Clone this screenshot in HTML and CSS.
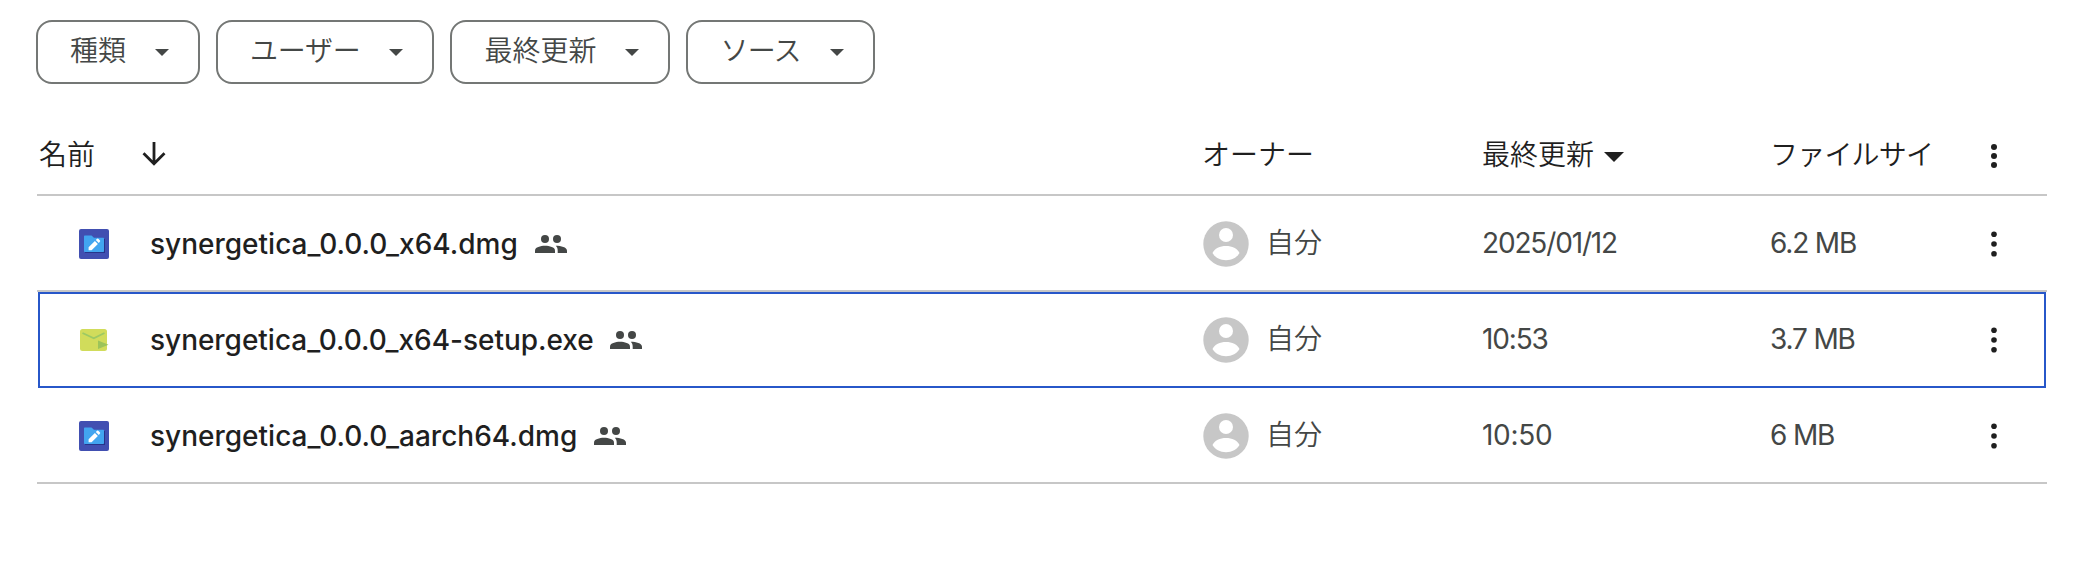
FILE: index.html
```html
<!DOCTYPE html>
<html lang="ja">
<head>
<meta charset="utf-8">
<title>ファイル一覧</title>
<link rel="stylesheet" href="styles.css">
</head>
<body>
<svg class="defs" width="0" height="0" aria-hidden="true">
  <defs>
    <symbol id="caret" viewBox="0 0 20 10"><path d="M0 0h20L10 10z"/></symbol>
    <symbol id="people" viewBox="0 0 32 18">
      <circle cx="10" cy="4" r="4"/>
      <circle cx="22" cy="4" r="4"/>
      <path d="M0 18v-2.600C0 12.200 5.500 10.700 10 10.700s10 1.500 10 4.700V18z"/>
      <path d="M20.800 10.800C26 10.800 32 12.300 32 15.700V18h-9.300v-2.600c0-2-.7-3.500-1.900-4.600z"/>
    </symbol>
    <symbol id="avatar" viewBox="0 0 46 46">
      <circle cx="23" cy="23" r="22.700" fill="#c7c7c7"/>
      <circle cx="23" cy="14" r="7" fill="#fff"/>
      <path d="M9.500 32C11.500 27.500 17 25 23 25s11.500 2.500 13.500 7C34 36.500 29 39.200 23 39.200S12 36.500 9.500 32z" fill="#fff"/>
    </symbol>
    <symbol id="dots" viewBox="0 0 8 28">
      <circle cx="4" cy="4.200" r="2.800"/><circle cx="4" cy="14" r="2.800"/><circle cx="4" cy="23.800" r="2.800"/>
    </symbol>
    <symbol id="disk" viewBox="0 0 30 30">
      <rect width="30" height="30" rx="2" fill="#414fb1"/>
      <path d="M6 8.500h8l2.500 1.500h9.500v14H6z" fill="#27358b"/>
      <path d="M5 7.200Q5 6.500 5.700 6.500h6.800l2.500 2.300h9.300q.7 0 .7.700v12.700q0 .8-.8.800H5.800q-.8 0-.8-.8z" fill="#42a5f0"/>
      <path d="M9.600 21.200v-3l6.300-6.300 3 3-6.300 6.300zM16.800 11l1.300-1.300q.6-.5 1.200 0l1.700 1.700q.5.600 0 1.200L19.800 14z" fill="#fff"/>
    </symbol>
    <symbol id="mail" viewBox="0 0 30 22">
      <rect x="1" width="27" height="22" rx="2.500" fill="#d1dc5b"/>
      <path d="M3.500 4l11.300 5.200L25.500 4" fill="none" stroke="#9cc964" stroke-width="1.800"/>
      <path d="M19 11.500L29.500 15.800 19 20z" fill="#9cc45a"/>
    </symbol>
  </defs>
</svg>

<nav class="filters">
  <button class="chip"><span>種類</span><svg class="chip-caret"><use href="#caret"/></svg></button>
  <button class="chip user"><span>ユーザー</span><svg class="chip-caret"><use href="#caret"/></svg></button>
  <button class="chip"><span>最終更新</span><svg class="chip-caret"><use href="#caret"/></svg></button>
  <button class="chip source"><span>ソース</span><svg class="chip-caret"><use href="#caret"/></svg></button>
</nav>

<main class="list">
  <header class="row head">
    <div class="title">名前<svg class="arrow" viewBox="0 0 24 24"><path d="M12 0v22M1.500 11.300L12 21.800 22.500 11.300"/></svg></div>
    <div class="owner">オーナー</div>
    <div class="date sorted">最終更新<svg class="sort-caret"><use href="#caret"/></svg></div>
    <div class="size">ファイルサイ</div>
    <svg class="more" viewBox="0 0 8 28"><circle cx="4" cy="5" r="3"/><circle cx="4" cy="14" r="3"/><circle cx="4" cy="23" r="3"/></svg>
  </header>
  <div class="row">
    <div class="file"><svg class="disk"><use href="#disk"/></svg><span class="name">synergetica_0.0.0_x64.dmg</span><svg class="people"><use href="#people"/></svg></div>
    <div class="owner"><svg class="avatar"><use href="#avatar"/></svg><span>自分</span></div>
    <div class="date">2025/01/12</div>
    <div class="size">6.2 MB</div>
    <svg class="more"><use href="#dots"/></svg>
  </div>
  <div class="row selected">
    <div class="file"><svg class="mail"><use href="#mail"/></svg><span class="name">synergetica_0.0.0_x64-setup.exe</span><svg class="people"><use href="#people"/></svg></div>
    <div class="owner"><svg class="avatar"><use href="#avatar"/></svg><span>自分</span></div>
    <div class="date">10:53</div>
    <div class="size">3.7 MB</div>
    <svg class="more"><use href="#dots"/></svg>
  </div>
  <div class="row">
    <div class="file"><svg class="disk"><use href="#disk"/></svg><span class="name wide">synergetica_0.0.0_aarch64.dmg</span><svg class="people"><use href="#people"/></svg></div>
    <div class="owner"><svg class="avatar"><use href="#avatar"/></svg><span>自分</span></div>
    <div class="date loose">10:50</div>
    <div class="size">6 MB</div>
    <svg class="more"><use href="#dots"/></svg>
  </div>
</main>
</body>
</html>
```
FILE: styles.css
```css
* { box-sizing: border-box; }
body {
  margin: 0;
  padding: 20px 33px 0 36px;
  background: #fff;
  color: #444746;
  font: 350 28px/40px Inter, "Noto Sans CJK JP", sans-serif;
}
svg { display: block; flex: none; }
.defs { position: absolute; }

.filters { display: flex; gap: 16px; height: 64px; }
.chip {
  display: flex;
  align-items: center;
  height: 64px;
  padding: 0 29px 0 32px;
  border: 2px solid #747775;
  border-radius: 16px;
  background: #fff;
  color: #444746;
  font: inherit;
  white-space: nowrap;
}
.chip span { padding-bottom: 2px; }
.user span { letter-spacing: -.25px; }
.source span { letter-spacing: -.8px; }
.chip-caret { width: 14px; height: 7px; margin: 1px 0 0 29px; fill: #444746; }

.list { margin: 28px 0 0 1px; }
.row {
  display: grid;
  grid-template-columns: 1165px 280px 288px 220px 8px;
  align-items: center;
  height: 96px;
  padding-top: 2px;
  border-bottom: 2px solid #c7c7c7;
}
.head { height: 84px; padding-top: 4px; color: #1f1f1f; }
.title { display: flex; align-items: center; padding-left: 2px; }
.arrow { width: 24px; height: 24px; margin: 0 0 2px 47px; fill: none; stroke: #1f1f1f; stroke-width: 2.800; }
.sorted { display: flex; align-items: center; }
.sort-caret { width: 20px; height: 10px; margin: 4px 0 0 10px; fill: #1f1f1f; }
.more { width: 8px; height: 28px; fill: #1f1f1f; }
.head .more { margin-top: 2px; }

.selected {
  grid-template-columns: 1164px 280px 288px 220px 8px;
  margin: 0 1px;
  padding-top: 0;
  border: 0;
  outline: 2px solid #2757c9;
  outline-offset: -2px;
}
.file { display: flex; align-items: center; padding-left: 42px; }
.selected .file { padding-left: 41px; }
.disk { width: 30px; height: 30px; margin-right: 41px; }
.mail { width: 30px; height: 22px; margin-right: 41px; }
.name { color: #1f1f1f; font-weight: 500; letter-spacing: 0; white-space: nowrap; }
.selected .name { letter-spacing: -.03px; }
.people { width: 32px; height: 18px; margin-left: 17px; fill: #444746; }
.selected .people { margin-left: 16px; }
.owner { display: flex; align-items: center; }
.owner span { padding-bottom: 2px; }
.avatar { width: 46px; height: 46px; margin: 0 17px 0 1px; }
.date, .size { padding-bottom: 2px; font-weight: 400; letter-spacing: -1.150px; }
.date.loose { letter-spacing: -.3px; }
.head .date, .head .size { padding-bottom: 0; font-weight: 350; }
.head .date { letter-spacing: 0; }
.head .size { letter-spacing: -.8px; }
```
